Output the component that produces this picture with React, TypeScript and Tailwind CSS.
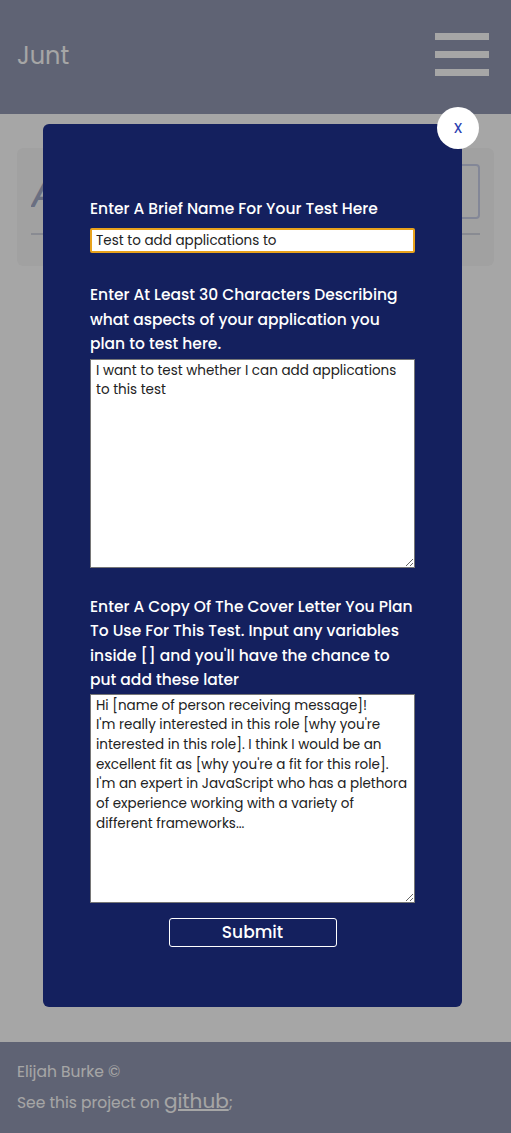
import React from "react";

const font = { fontFamily: "'Poppins', 'Open Sans', 'Noto Sans', sans-serif" };

export default function App() {
  return (
    <div className="relative min-h-[1133px] flex flex-col bg-white" style={font}>
      {/* HEADER */}
      <header className="h-[114px] bg-[#9399b2] flex items-start justify-between pl-[17px] pr-[22px]">
        <div className="mt-[39px] text-[24px] leading-[34px] text-white font-normal">Junt</div>
        <div className="mt-[33px] flex flex-col gap-[11px]">
          <div className="w-[54px] h-[7px] bg-white" />
          <div className="w-[54px] h-[7px] bg-white" />
          <div className="w-[54px] h-[7px] bg-white" />
        </div>
      </header>

      {/* MAIN - card behind the modal */}
      <main className="flex-1 px-[17px] pt-[34px]">
        <div className="h-[118px] rounded-md bg-[#f8f8f8] px-[14px] pt-[16px]">
          <div className="flex items-center justify-between gap-2">
            <input
              className="min-w-0 flex-1 bg-transparent text-[44px] leading-[55px] italic placeholder:text-[#a3abc6] outline-none"
              placeholder="Add A New Test"
            />
            <div className="w-[70px] h-[55px] border-2 border-[#c9cfe8] rounded" />
          </div>
          <div className="mt-[14px] h-[2px] bg-[#d3d6e0]" />
        </div>
      </main>

      {/* FOOTER */}
      <footer className="h-[91px] bg-[#9399b2] px-[17px] pt-[17px] text-white">
        <div className="text-[15.5px] leading-[26px]">Elijah Burke ©</div>
        <div className="text-[15.5px] leading-[32px]">
          See this project on{" "}
          <a className="text-[20px] underline" href="#">github</a>;
        </div>
      </footer>

      {/* OVERLAY + MODAL */}
      <div className="absolute inset-0 bg-black/35">
        <div className="absolute left-[43px] top-[124px] w-[419px] h-[883px] rounded-md bg-[#14205e] px-[47px] pt-[73px]">
          <button className="absolute -top-[17px] -right-[17px] w-[42px] h-[42px] rounded-full bg-white text-[#2a41b0] text-[17px] flex items-center justify-center">
            x
          </button>

          <label className="block text-white text-[15.5px] font-medium leading-[24px]">
            Enter A Brief Name For Your Test Here
          </label>
          <input
            className="mt-[7px] block w-full h-[25px] bg-white rounded-[2px] border-2 border-[#e8a21c] px-[4px] text-[13.5px] text-[#222] outline-none"
            defaultValue="Test to add applications to"
          />

          <label className="mt-[30px] block text-white text-[15.5px] font-medium leading-[24.5px]">
            Enter At Least 30 Characters Describing what aspects of your application you plan to test here.
          </label>
          <textarea
            className="mt-[2px] block w-full h-[209px] bg-white border border-[#767676] px-[5px] py-[1px] text-[13.5px] leading-[19.7px] text-[#222] resize-y outline-none"
            defaultValue="I want to test whether I can add applications to this test"
          />

          <label className="mt-[27px] block text-white text-[15.5px] font-medium leading-[24.5px]">
            Enter A Copy Of The Cover Letter You Plan To Use For This Test. Input any variables inside [] and you'll have the chance to put add these later
          </label>
          <textarea
            className="mt-[1px] block w-full h-[209px] bg-white border border-[#767676] px-[5px] py-[1px] text-[13.5px] leading-[19.7px] text-[#222] resize-y outline-none"
            defaultValue={
              "Hi [name of person receiving message]!\nI'm really interested in this role [why you're interested in this role]. I think I would be an excellent fit as [why you're a fit for this role]. I'm an expert in JavaScript who has a plethora of experience working with a variety of different frameworks..."
            }
          />

          <div className="flex justify-center mt-[15px]">
            <button className="w-[168px] h-[29px] rounded-[3px] border border-white text-white text-[17px] font-medium leading-none">
              Submit
            </button>
          </div>
        </div>
      </div>
    </div>
  );
}
